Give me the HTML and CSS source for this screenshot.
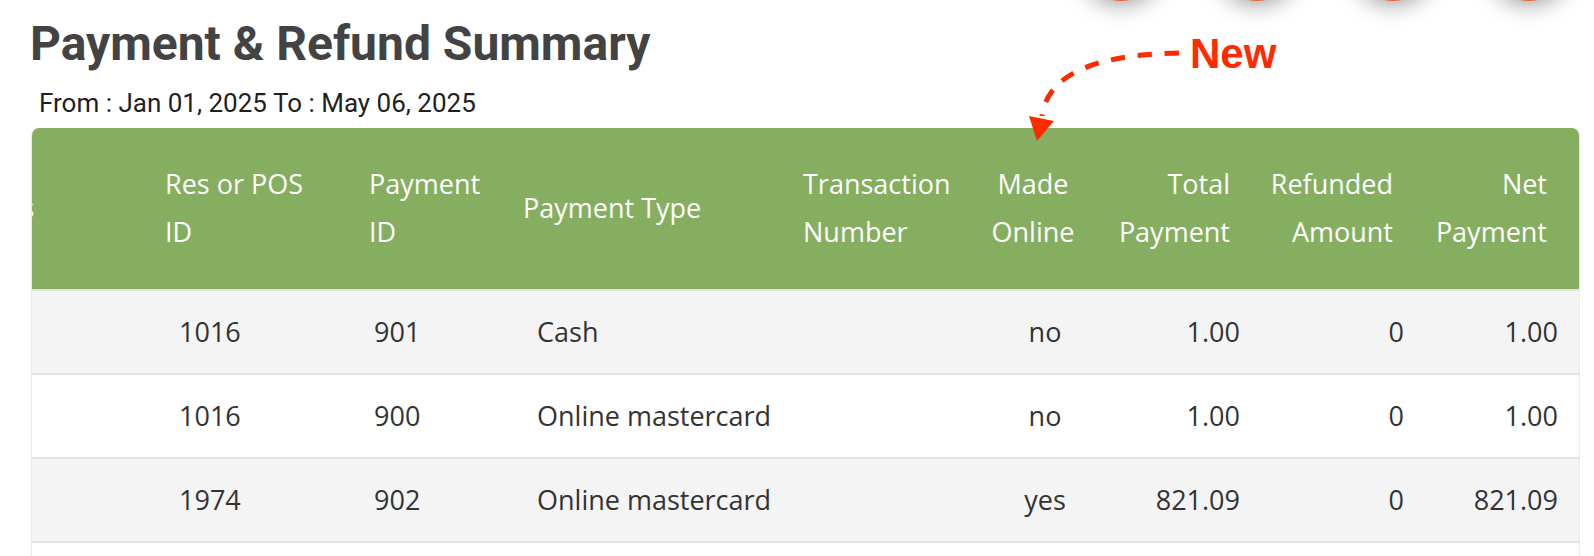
FILE: index.html
```html
<!DOCTYPE html>
<html>
<head>
  <title>Payment &amp; Refund Summary</title>
  <link rel="stylesheet" href="styles.css">
</head>
<body>
  <div class="page">
    <h1 class="report-title">Payment &amp; Refund Summary</h1>
    <p class="report-range">From : Jan 01, 2025 To : May 06, 2025</p>

    <div class="table-wrap">
      <table class="summary">
        <colgroup>
          <col class="w-status">
          <col class="w-res">
          <col class="w-pay">
          <col class="w-type">
          <col class="w-trans">
          <col class="w-online">
          <col class="w-total">
          <col class="w-refund">
          <col class="w-net">
        </colgroup>
        <thead>
          <tr>
            <th class="clipped"><span>Status</span></th>
            <th>Res or POS<br>ID</th>
            <th>Payment<br>ID</th>
            <th>Payment Type</th>
            <th>Transaction<br>Number</th>
            <th class="center">Made<br>Online</th>
            <th class="right">Total<br>Payment</th>
            <th class="right">Refunded<br>Amount</th>
            <th class="right last">Net<br>Payment</th>
          </tr>
        </thead>
        <tbody>
          <tr>
            <td></td>
            <td>1016</td>
            <td>901</td>
            <td>Cash</td>
            <td></td>
            <td>no</td>
            <td>1.00</td>
            <td>0</td>
            <td>1.00</td>
          </tr>
          <tr>
            <td></td>
            <td>1016</td>
            <td>900</td>
            <td>Online mastercard</td>
            <td></td>
            <td>no</td>
            <td>1.00</td>
            <td>0</td>
            <td>1.00</td>
          </tr>
          <tr>
            <td></td>
            <td>1974</td>
            <td>902</td>
            <td>Online mastercard</td>
            <td></td>
            <td>yes</td>
            <td>821.09</td>
            <td>0</td>
            <td>821.09</td>
          </tr>
          <tr>
            <td>&nbsp;</td>
            <td></td>
            <td></td>
            <td></td>
            <td></td>
            <td></td>
            <td></td>
            <td></td>
            <td></td>
          </tr>
        </tbody>
      </table>
    </div>

    <!-- floating action buttons, mostly above the top of the window -->
    <div class="fab-row">
      <span class="fab"></span>
      <span class="fab"></span>
      <span class="fab"></span>
      <span class="fab"></span>
    </div>

    <!-- "New" callout pointing at the Made Online column -->
    <span class="callout-label">New</span>
    <svg class="callout-arrow" width="180" height="110" viewBox="1010 40 180 110">
      <path d="M1179 53 Q1050 55 1042 116" fill="none" stroke="#ff2a00" stroke-width="5" stroke-dasharray="14 13"/>
      <polygon points="1029,116 1054,121 1037,141" fill="#ff2a00"/>
    </svg>
  </div>
</body>
</html>
```

FILE: styles.css
```css
:root {
  --green: #85ae60;
  --row-alt: #f4f4f4;
  --row-line: #e3e3e3;
  --text: #333333;
  --title: #434343;
  --accent: #ff2a00;
}

html {
  overflow: hidden;
}

body {
  margin: 0;
  background: #ffffff;
  font-family: 'Open Sans', 'Noto Sans', sans-serif;
  color: var(--text);
}

.page {
  position: relative;
  padding: 16px 0 0 31px;
}

.report-title {
  margin: 0 0 0 -1px;
  font-family: Roboto, 'Liberation Sans', sans-serif;
  font-size: 48px;
  line-height: 56px;
  font-weight: 700;
  color: var(--title);
}

.report-range {
  margin: 16px 0 0 8px;
  font-family: Roboto, 'Liberation Sans', sans-serif;
  font-size: 26px;
  line-height: 30px;
  color: #1f1f1f;
}

.table-wrap {
  width: 1547px;
  margin-top: 10px;
  border: 1px solid #ececec;
  border-top: none;
  border-radius: 8px 8px 0 0;
  overflow: hidden;
}

.summary {
  width: 1547px;
  table-layout: fixed;
  border-collapse: collapse;
  font-size: 27px;
}

.w-status { width: 121px; }
.w-res { width: 204px; }
.w-pay { width: 154px; }
.w-type { width: 280px; }
.w-trans { width: 173px; }
.w-online { width: 138px; }
.w-total { width: 140px; }
.w-refund { width: 163px; }
.w-net { width: 174px; }

.summary th {
  background-color: var(--green);
  color: #ffffff;
  font-weight: 400;
  text-align: left;
  white-space: nowrap;
  line-height: 48px;
  padding: 32px 12px 33px;
  border-bottom: 2px solid var(--row-line);
}

.summary th.center { text-align: center; }
.summary th.right { text-align: right; }
.summary th.last { padding-right: 32px; }

.summary th.clipped {
  overflow: hidden;
  text-indent: -88px;
}

.summary td {
  line-height: 36px;
  padding: 23px 12px;
  white-space: nowrap;
  border-bottom: 2px solid var(--row-line);
}

.summary tbody tr:nth-child(odd) td {
  background-color: var(--row-alt);
}

.summary td:nth-child(2) { padding-left: 26px; }
.summary td:nth-child(3) { padding-left: 17px; }
.summary td:nth-child(4) { padding-left: 26px; }
.summary td:nth-child(6) { text-align: center; padding-left: 24px; padding-right: 0; }
.summary td:nth-child(7) { text-align: right; padding-right: 2px; }
.summary td:nth-child(8) { text-align: right; padding-right: 1px; }
.summary td:nth-child(9) { text-align: right; padding-right: 21px; }

.fab-row {
  position: absolute;
  top: -79px;
  left: 1081px;
  display: flex;
  gap: 56px;
}

.fab {
  width: 80px;
  height: 80px;
  border-radius: 50%;
  background-color: #f0643c;
  box-shadow: 0 2px 24px rgba(0, 0, 0, 0.45);
}

.callout-label {
  position: absolute;
  top: 33px;
  left: 1190px;
  font-family: 'Liberation Sans', Arial, sans-serif;
  font-size: 42px;
  line-height: 42px;
  font-weight: 700;
  color: var(--accent);
}

.callout-arrow {
  position: absolute;
  top: 40px;
  left: 1010px;
}
```
